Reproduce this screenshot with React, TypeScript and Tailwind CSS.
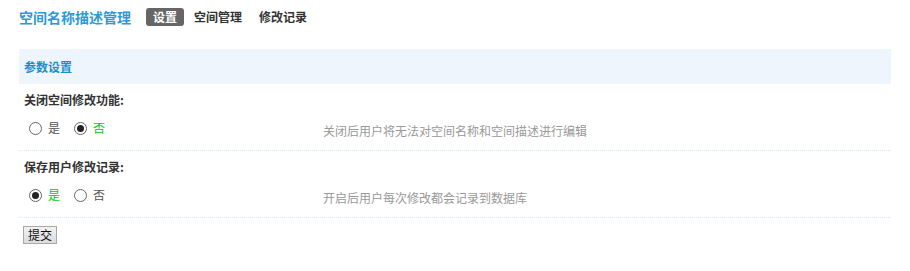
import { useState } from "react";

const font = { fontFamily: '"Noto Sans CJK SC", "Noto Sans", sans-serif' };

function Radio({ checked, label, onClick }: { checked: boolean; label: string; onClick: () => void }) {
  return (
    <button type="button" onClick={onClick} className="flex items-center gap-[6px]">
      <span className="flex h-[13px] w-[13px] items-center justify-center rounded-full border border-[#666] bg-white">
        {checked && <span className="h-[7px] w-[7px] rounded-full bg-[#222]" />}
      </span>
      <span className={`text-[12px] ${checked ? "text-[#00cc00]" : "text-[#555]"}`}>{label}</span>
    </button>
  );
}

function SettingRow({
  title,
  desc,
  value,
  onChange,
}: {
  title: string;
  desc: string;
  value: boolean;
  onChange: (v: boolean) => void;
}) {
  return (
    <div className="border-b border-dotted border-[#d6e6f5] px-[5px] pt-[8px] pb-[10px]">
      <p className="text-[12px] leading-[16px] font-bold text-[#333]">{title}</p>
      <div className="mt-[8px] flex h-[24px] items-center">
        <div className="flex w-[299px] items-center gap-[14px] pl-[5px]">
          <Radio checked={value} label="是" onClick={() => onChange(true)} />
          <Radio checked={!value} label="否" onClick={() => onChange(false)} />
        </div>
        <p className="pt-[5px] text-[12px] text-[#999]">{desc}</p>
      </div>
    </div>
  );
}

export default function App() {
  const [tab, setTab] = useState("设置");
  const [closeEdit, setCloseEdit] = useState(false);
  const [saveLog, setSaveLog] = useState(true);
  const tabs = ["设置", "空间管理", "修改记录"];

  return (
    <div className="min-h-[271px] bg-white px-[19px] pt-[8px]" style={font}>
      <div className="flex items-center">
        <h1 className="text-[14px] leading-[18px] font-bold text-[#2b9ad6]">空间名称描述管理</h1>
        <div className="ml-[15px] flex items-center gap-[3px]">
          {tabs.map((t) => (
            <button
              key={t}
              type="button"
              onClick={() => setTab(t)}
              className={`h-[18px] rounded-[3px] px-[7px] text-[12px] leading-[18px] font-bold ${
                tab === t ? "bg-[#666] text-white" : "text-[#333]"
              }`}
            >
              {t}
            </button>
          ))}
        </div>
      </div>

      <div className="mt-[23px] flex h-[35px] items-center bg-[#eef5fc] px-[5px]">
        <span className="text-[12px] font-bold text-[#1a8fcc]">参数设置</span>
      </div>

      <SettingRow
        title="关闭空间修改功能:"
        desc="关闭后用户将无法对空间名称和空间描述进行编辑"
        value={closeEdit}
        onChange={setCloseEdit}
      />
      <SettingRow
        title="保存用户修改记录:"
        desc="开启后用户每次修改都会记录到数据库"
        value={saveLog}
        onChange={setSaveLog}
      />

      <button
        type="button"
        className="mt-[8px] ml-[4px] h-[18px] border border-[#aaa] bg-gradient-to-b from-[#f2f2f2] to-[#dcdcdc] px-[4px] text-[12px] leading-[16px] text-[#111]"
      >
        提交
      </button>
    </div>
  );
}
